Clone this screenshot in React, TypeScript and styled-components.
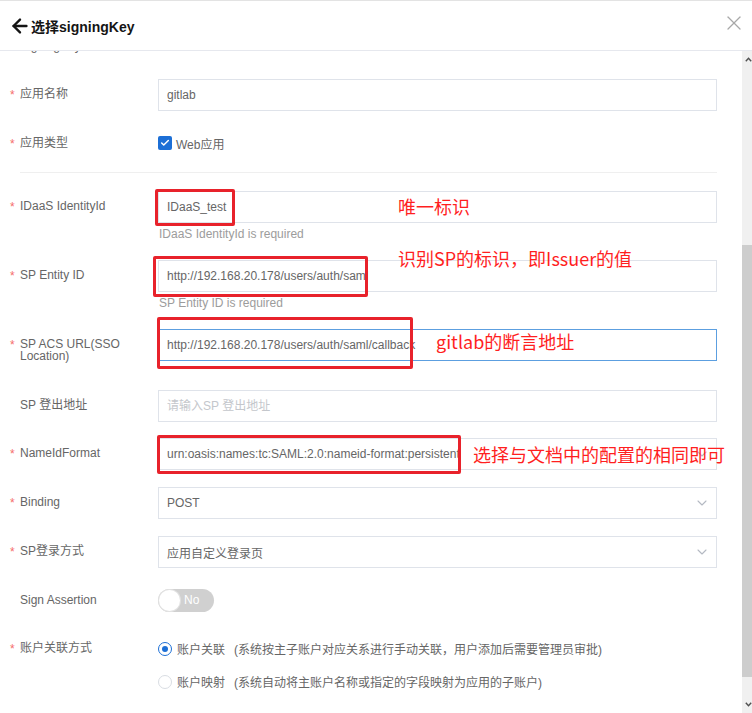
import React, { useLayoutEffect, useRef, useState } from "react";
import styled, { createGlobalStyle } from "styled-components";
import { ArrowLeft, X, ChevronDown, Check, Plus } from "lucide-react";

const FONT = `"Liberation Sans", Arial, "Noto Sans CJK SC", sans-serif`;
const CJK = `"Noto Sans CJK SC", "Liberation Sans", sans-serif`;

const GlobalStyle = createGlobalStyle`
  html, body { margin: 0; padding: 0; background: #fff; }
  body { font-family: ${FONT}; }
  *, *::before, *::after { box-sizing: border-box; }
`;

const Modal = styled.div`
  width: 752px;
  height: 713px;
  display: flex;
  flex-direction: column;
  background: #fff;
  overflow: hidden;
`;

const Header = styled.header`
  flex: 0 0 51px;
  display: flex;
  align-items: center;
  justify-content: space-between;
  padding: 0 6px 0 9px;
  border-top: 1px solid #e3e3e3;
  border-bottom: 1px solid #e6e8ee;
`;

const Title = styled.h1`
  margin: 0;
  display: flex;
  align-items: center;
  font-family: ${FONT};
  font-size: 14px;
  font-weight: 700;
  color: #151515;
`;

const CloseButton = styled.button`
  border: 0;
  background: none;
  padding: 0;
  margin-top: -5px;
  display: flex;
  color: #a8a8a8;
  cursor: pointer;
`;

const Body = styled.div`
  flex: 1 1 auto;
  min-height: 0;
  display: flex;
`;

const Viewport = styled.div`
  flex: 1 1 auto;
  min-width: 0;
  overflow: hidden;
`;

const ScrollBar = styled.div`
  flex: 0 0 10px;
  display: flex;
  flex-direction: column;
  background: #f0f0f0;
`;

const ScrollArrow = styled.div`
  flex: 0 0 17px;
  display: flex;
  align-items: center;
  padding-left: 3px;
  color: #505050;
`;

const ScrollTrack = styled.div`
  flex: 1 1 auto;
  min-height: 0;
`;

const ScrollThumb = styled.div`
  width: 100%;
  background: #cdcdcd;
`;

const Form = styled.div`
  display: flex;
  flex-direction: column;
  padding: 20px 25px 44px 10px;
`;

const FormItem = styled.div<{ $mb?: number }>`
  display: grid;
  grid-template-columns: 148px minmax(0, 1fr);
  margin-bottom: ${(p) => p.$mb ?? 17}px;
`;

const Label = styled.label<{ $pt?: number }>`
  display: flex;
  padding: ${(p) => p.$pt ?? 9}px 12px 0 0;
  font-size: 12px;
  line-height: 12px;
  color: #666;
`;

const Star = styled.span`
  flex: 0 0 10px;
  color: #f56c6c;
  position: relative;
  top: 1px;
`;

const Control = styled.div`
  position: relative;
  min-width: 0;
`;

const TextInput = styled.input<{ $focused?: boolean }>`
  display: block;
  width: 100%;
  height: 32px;
  padding: 0 8px;
  border: 1px solid ${(p) => (p.$focused ? "#5c9fe0" : "#dfe3ea")};
  border-radius: 0;
  outline: none;
  background: #fff;
  font-family: ${FONT};
  font-size: 12px;
  color: #666;
  &::placeholder { color: #c4c7cc; }
`;

const TextArea = styled.textarea`
  display: block;
  width: 100%;
  height: 85px;
  padding: 8px;
  border: 1px solid #dfe3ea;
  resize: none;
  outline: none;
  font-family: ${FONT};
  font-size: 12px;
  color: #666;
`;

const LogoUpload = styled.div`
  width: 64px;
  height: 64px;
  border: 1px dashed #d3d7de;
  display: flex;
  align-items: center;
  justify-content: center;
  color: #b0b4bb;
`;

const EmptyValue = styled.div`
  height: 32px;
`;

const SelectBox = styled.div`
  display: flex;
  align-items: center;
  justify-content: space-between;
  height: 32px;
  padding: 0 6px 0 8px;
  border: 1px solid #dfe3ea;
  background: #fff;
  font-size: 12px;
  color: #666;
`;

const SelectValue = styled.span`
  white-space: nowrap;
  overflow: hidden;
`;

const Caret = styled.span`
  display: flex;
  color: #b4b9c2;
`;

const ErrorText = styled.div`
  padding: 5px 0 3px 1px;
  font-size: 12px;
  line-height: 12px;
  color: #9c9c9c;
`;

const Divider = styled.hr`
  margin: 0 0 18px 10px;
  border: 0;
  border-top: 1px solid #efefef;
`;

const CheckRow = styled.label`
  display: flex;
  align-items: center;
  gap: 4px;
  height: 32px;
  font-size: 12px;
  color: #666;
`;

const CheckBox = styled.span`
  width: 14px;
  height: 14px;
  border-radius: 2px;
  background: #1c6fd6;
  display: flex;
  align-items: center;
  justify-content: center;
  color: #fff;
`;

const SwitchWrap = styled.div`
  height: 32px;
  display: flex;
  align-items: center;
`;

const Switch = styled.span`
  display: inline-flex;
  align-items: center;
  gap: 4px;
  width: 56px;
  height: 23px;
  padding-left: 1px;
  border-radius: 12px;
  background: #d0d0d0;
  color: #fff;
  font-size: 12px;
`;

const Knob = styled.span`
  width: 21px;
  height: 21px;
  border-radius: 50%;
  background: #fff;
  box-shadow: 0 0 0 1px #e2e2e2;
`;

const RadioGroup = styled.div`
  display: flex;
  flex-direction: column;
`;

const RadioRow = styled.label`
  display: flex;
  align-items: center;
  gap: 5px;
  height: 33px;
  font-size: 12px;
  color: #666;
  white-space: nowrap;
`;

const RadioCircle = styled.span<{ $checked?: boolean }>`
  width: 14px;
  height: 14px;
  border-radius: 50%;
  border: 1px solid ${(p) => (p.$checked ? "#1c6fd6" : "#d9dde3")};
  background: #fff;
  display: flex;
  align-items: center;
  justify-content: center;
  &::after {
    content: "";
    width: 6px;
    height: 6px;
    border-radius: 50%;
    background: ${(p) => (p.$checked ? "#1c6fd6" : "transparent")};
  }
`;

const RadioDesc = styled.span`
  margin-left: 4px;
`;

const MarkBox = styled.span<{ $l: number; $t: number; $w: number; $h: number }>`
  position: absolute;
  left: ${(p) => p.$l}px;
  top: ${(p) => p.$t}px;
  width: ${(p) => p.$w}px;
  height: ${(p) => p.$h}px;
  border: 3px solid #e8222b;
  border-radius: 2px;
  pointer-events: none;
`;

const MarkNote = styled.span<{ $l: number; $t: number }>`
  position: absolute;
  left: ${(p) => p.$l}px;
  top: ${(p) => p.$t}px;
  font-family: ${CJK};
  font-size: 18px;
  line-height: 24px;
  color: #ff1f1f;
  white-space: nowrap;
  pointer-events: none;
`;

type FieldProps = {
  label: string;
  required?: boolean;
  mb?: number;
  pt?: number;
  children: React.ReactNode;
};

function Field({ label, required, mb, pt, children }: FieldProps) {
  return (
    <FormItem $mb={mb}>
      <Label $pt={pt}>
        <Star>{required ? "*" : ""}</Star>
        <span>{label}</span>
      </Label>
      <Control>{children}</Control>
    </FormItem>
  );
}

function Select({ value }: { value: string }) {
  return (
    <SelectBox>
      <SelectValue>{value}</SelectValue>
      <Caret>
        <ChevronDown size={16} strokeWidth={1.6} />
      </Caret>
    </SelectBox>
  );
}

function ArrowGlyph({ up }: { up?: boolean }) {
  return (
    <svg width="7" height="5" viewBox="0 0 7 5" aria-hidden="true">
      <path
        d={up ? "M0.8 4.2 L3.5 1.2 L6.2 4.2" : "M0.8 0.8 L3.5 3.8 L6.2 0.8"}
        fill="none"
        stroke="currentColor"
        strokeWidth="1.4"
      />
    </svg>
  );
}

const SCROLL_TOP = 272;

export default function App() {
  const viewRef = useRef<HTMLDivElement>(null);
  const trackRef = useRef<HTMLDivElement>(null);
  const [thumb, setThumb] = useState({ top: 0, size: 0 });

  useLayoutEffect(() => {
    const v = viewRef.current;
    const t = trackRef.current;
    if (!v || !t) return;
    v.scrollTop = SCROLL_TOP;
    const trackH = t.clientHeight;
    const ratio = v.clientHeight / v.scrollHeight;
    const size = Math.round(trackH * ratio);
    const maxScroll = v.scrollHeight - v.clientHeight;
    const top = maxScroll > 0 ? Math.round(((trackH - size) * v.scrollTop) / maxScroll) : 0;
    setThumb({ top, size });
  }, []);

  return (
    <>
      <GlobalStyle />
      <Modal>
        <Header>
          <Title>
            <ArrowLeft size={22} strokeWidth={2.6} />
            选择signingKey
          </Title>
          <CloseButton aria-label="关闭">
            <X size={24} strokeWidth={1.3} />
          </CloseButton>
        </Header>
        <Body>
          <Viewport ref={viewRef}>
            <Form>
              <Field label="应用Logo">
                <LogoUpload>
                  <Plus size={20} strokeWidth={1.5} />
                </LogoUpload>
              </Field>
              <Field label="应用ID" required>
                <TextInput readOnly value="idaas-gitlab-saml" />
              </Field>
              <Field label="应用描述">
                <TextArea readOnly value="" placeholder="请输入应用描述" />
              </Field>
              <Field label="SigningKey" required mb={16}>
                <EmptyValue />
              </Field>

              <Field label="应用名称" required mb={16}>
                <TextInput readOnly value="gitlab" />
              </Field>
              <Field label="应用类型" required mb={13} pt={10}>
                <CheckRow>
                  <CheckBox>
                    <Check size={10} strokeWidth={3.5} />
                  </CheckBox>
                  Web应用
                </CheckRow>
              </Field>
              <Divider />

              <Field label="IDaaS IdentityId" required>
                <TextInput readOnly value="IDaaS_test" />
                <ErrorText>IDaaS IdentityId is required</ErrorText>
                <MarkBox $l={-3} $t={-2} $w={80} $h={37} />
                <MarkNote $l={240} $t={3}>唯一标识</MarkNote>
              </Field>
              <Field label="SP Entity ID" required>
                <TextInput readOnly value="http://192.168.20.178/users/auth/saml" />
                <ErrorText>SP Entity ID is required</ErrorText>
                <MarkBox $l={-5} $t={-4} $w={215} $h={41} />
                <MarkNote $l={240} $t={-14}>识别SP的标识，即Issuer的值</MarkNote>
              </Field>
              <Field label="SP ACS URL(SSO Location)" required mb={28}>
                <TextInput
                  $focused
                  readOnly
                  value="http://192.168.20.178/users/auth/saml/callback"
                />
                <MarkBox $l={-1} $t={-12} $w={256} $h={52} />
                <MarkNote $l={278} $t={0}>gitlab的断言地址</MarkNote>
              </Field>
              <Field label="SP 登出地址" mb={16}>
                <TextInput readOnly value="" placeholder="请输入SP 登出地址" />
              </Field>
              <Field label="NameIdFormat" required>
                <Select value="urn:oasis:names:tc:SAML:2.0:nameid-format:persistent" />
                <MarkBox $l={-1} $t={-3} $w={304} $h={39} />
                <MarkNote $l={315} $t={4}>选择与文档中的配置的相同即可</MarkNote>
              </Field>
              <Field label="Binding" required>
                <Select value="POST" />
              </Field>
              <Field label="SP登录方式" required mb={16}>
                <Select value="应用自定义登录页" />
              </Field>
              <Field label="Sign Assertion" mb={16} pt={10}>
                <SwitchWrap>
                  <Switch>
                    <Knob />
                    No
                  </Switch>
                </SwitchWrap>
              </Field>
              <Field label="账户关联方式" required mb={0} pt={10}>
                <RadioGroup>
                  <RadioRow>
                    <RadioCircle $checked />
                    <span>账户关联</span>
                    <RadioDesc>(系统按主子账户对应关系进行手动关联，用户添加后需要管理员审批)</RadioDesc>
                  </RadioRow>
                  <RadioRow>
                    <RadioCircle />
                    <span>账户映射</span>
                    <RadioDesc>(系统自动将主账户名称或指定的字段映射为应用的子账户)</RadioDesc>
                  </RadioRow>
                </RadioGroup>
              </Field>
            </Form>
          </Viewport>
          <ScrollBar aria-hidden="true">
            <ScrollArrow>
              <ArrowGlyph up />
            </ScrollArrow>
            <ScrollTrack ref={trackRef}>
              <ScrollThumb style={{ marginTop: thumb.top, height: thumb.size }} />
            </ScrollTrack>
            <ScrollArrow>
              <ArrowGlyph />
            </ScrollArrow>
          </ScrollBar>
        </Body>
      </Modal>
    </>
  );
}
